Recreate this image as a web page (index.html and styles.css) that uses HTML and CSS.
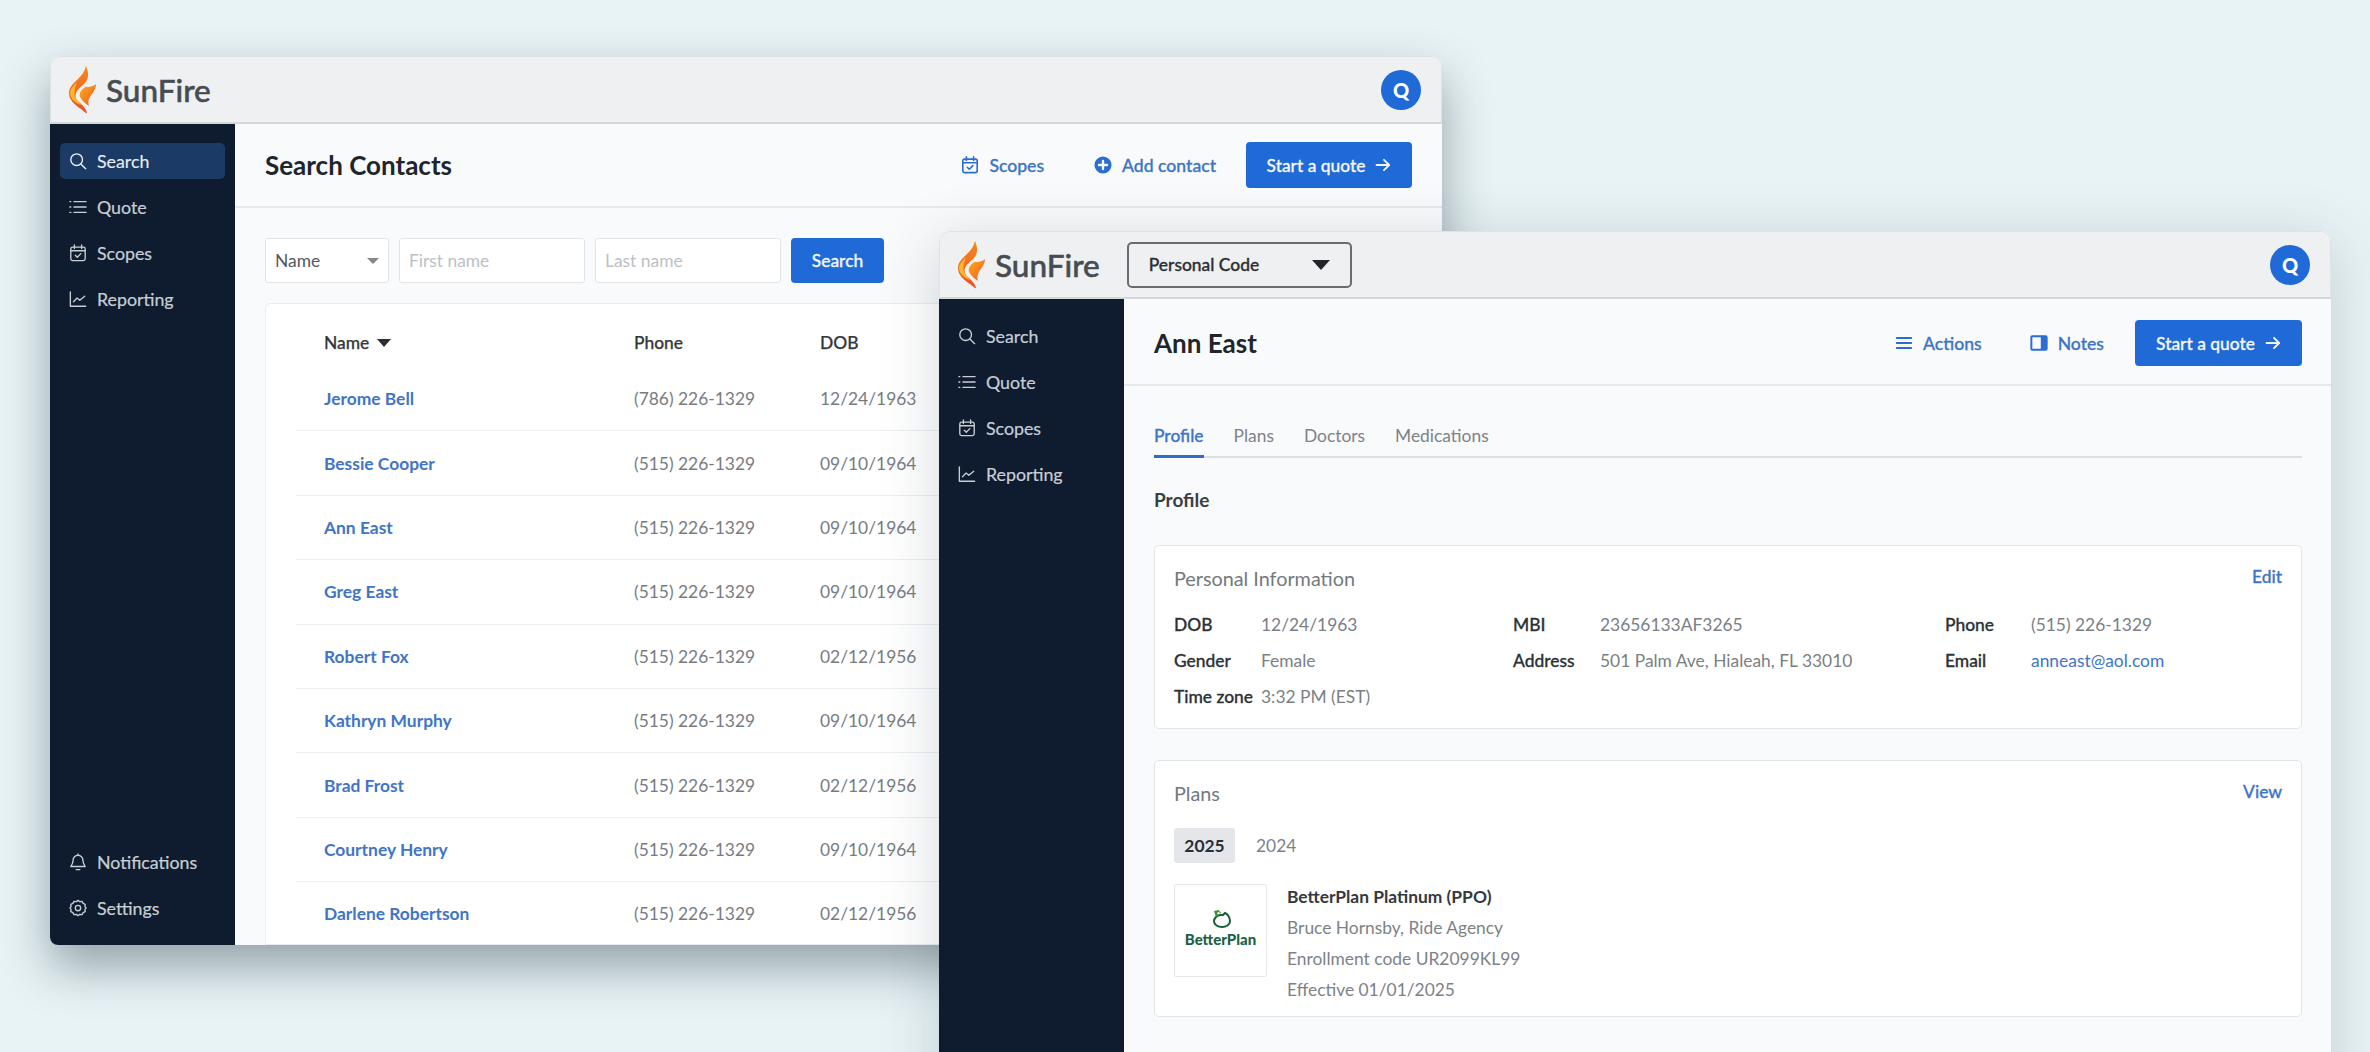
FILE: index.html
```html
<!DOCTYPE html>
<html lang="en">
<head>
<meta charset="utf-8">
<title>SunFire</title>
<link rel="stylesheet" href="styles.css">
</head>
<body>
<svg class="sprite" width="0" height="0" aria-hidden="true">
  <defs>
    <linearGradient id="flameA" x1="0" y1="0" x2="1" y2="1">
      <stop offset="0" stop-color="#ffb020"/><stop offset="1" stop-color="#f0541c"/>
    </linearGradient>
    <linearGradient id="flameB" x1="0" y1="0" x2="0" y2="1">
      <stop offset="0" stop-color="#f58a1f"/><stop offset="1" stop-color="#ef4e23"/>
    </linearGradient>
  </defs>
  <symbol id="flame" viewBox="0 0 28 48">
    <path fill="url(#flameB)" d="M17 0c2 5 3 9 1 14 -2 4 -7 7 -10 11 -3 5 -1 9 3 12 2 2 6 5 7 10 -1 1 -3 -2 -6 -4C6 39 0 34 0 27c0-6 5-10 9-14 4-4 7-8 8-13z"/>
    <path fill="#ffb62a" d="M8 16C6 22 4 27 7 33c2 3 4 4 5 6C7 37 1 33 1 27c0-4 4-8 7-11z"/>
    <path fill="url(#flameA)" d="M27 18c0 6-4 9-6 13-2 3-2 6-1 9-3-2-7-5-9-9-1-4 1-7 4-9 2-2 3-1 5-1 3-1 5-1 7-3z"/>
  </symbol>
  <symbol id="i-search" viewBox="0 0 20 20"><circle cx="8.5" cy="8.5" r="6.5"/><path d="M13.5 13.5 18.500 18.500"/></symbol>
  <symbol id="i-list" viewBox="0 0 20 20"><path d="M5.500 4H19M5.500 10H19M5.500 16H19M1 4h1M1 10h1M1 16h1"/></symbol>
  <symbol id="i-cal" viewBox="0 0 20 20"><rect x="2" y="3.500" width="16" height="15" rx="2"/><path d="M2 7.500h16M6 1v4M14 1v4M7 12.500l2.200 2.200 4-4"/></symbol>
  <symbol id="i-chart" viewBox="0 0 20 20"><path d="M1.500 2v16h17M5 13l4-4 3 2.500L17.500 7"/></symbol>
  <symbol id="i-bell" viewBox="0 0 20 20"><path d="M10 2.500a5.500 5.500 0 0 0-5.500 5.500c0 4-2 6-2.500 7h16c-.5-1-2.500-3-2.500-7A5.500 5.500 0 0 0 10 2.500zM8 18.500h4M10 1v1.500"/></symbol>
  <symbol id="i-gear" viewBox="0 0 20 20"><path d="M10 1.500l2 1.500 2.500-.3 1.200 2.200 2.300 1-.3 2.600L19 10l-1.300 1.500.3 2.600-2.300 1-1.200 2.200-2.500-.3-2 1.500-2-1.500-2.500.3-1.200-2.200-2.300-1 .3-2.600L1 10l1.300-1.500L2 5.900l2.300-1 1.200-2.200 2.500.3z"/><circle cx="10" cy="10" r="3"/></symbol>
  <symbol id="i-arrow" viewBox="0 0 16 16"><path d="M1.500 8H14M9 2.800 14.200 8 9 13.200"/></symbol>
</svg>

<main class="stage">
  <section class="window window-contacts">
    <header class="topbar">
      <div class="brand"><svg class="flame"><use href="#flame"/></svg><span class="brand-name">SunFire</span></div>
      <span class="avatar">Q</span>
    </header>
    <div class="body">
      <nav class="sidebar">
        <div class="nav-group">
          <a class="nav-item is-active"><svg class="nav-icon"><use href="#i-search"/></svg>Search</a>
          <a class="nav-item"><svg class="nav-icon"><use href="#i-list"/></svg>Quote</a>
          <a class="nav-item"><svg class="nav-icon"><use href="#i-cal"/></svg>Scopes</a>
          <a class="nav-item"><svg class="nav-icon"><use href="#i-chart"/></svg>Reporting</a>
        </div>
        <div class="nav-group">
          <a class="nav-item"><svg class="nav-icon"><use href="#i-bell"/></svg>Notifications</a>
          <a class="nav-item"><svg class="nav-icon"><use href="#i-gear"/></svg>Settings</a>
        </div>
      </nav>
      <div class="content">
        <div class="page-head">
          <h1 class="page-title">Search Contacts</h1>
          <div class="actions">
            <a class="action action-scopes"><svg class="action-icon"><use href="#i-cal"/></svg>Scopes</a>
            <a class="action action-add"><svg class="action-icon solid" viewBox="0 0 20 20"><circle cx="10" cy="10" r="9.500"/><path class="plus" d="M10 5.500v9M5.500 10h9"/></svg>Add contact</a>
            <a class="btn-primary btn-quote">Start a quote<svg class="btn-arrow"><use href="#i-arrow"/></svg></a>
          </div>
        </div>
        <div class="filters">
          <div class="field field-select">Name<span class="caret-sm"></span></div>
          <div class="field field-text">First name</div>
          <div class="field field-text">Last name</div>
          <a class="btn-primary btn-search">Search</a>
        </div>
        <div class="table-card">
          <div class="t-row t-head"><span class="t-name-head">Name<span class="caret-th"></span></span><span>Phone</span><span>DOB</span></div>
          <div class="t-row"><a class="t-link">Jerome Bell</a><span>(786) 226-1329</span><span>12/24/1963</span></div>
          <div class="t-row"><a class="t-link">Bessie Cooper</a><span>(515) 226-1329</span><span>09/10/1964</span></div>
          <div class="t-row"><a class="t-link">Ann East</a><span>(515) 226-1329</span><span>09/10/1964</span></div>
          <div class="t-row"><a class="t-link">Greg East</a><span>(515) 226-1329</span><span>09/10/1964</span></div>
          <div class="t-row"><a class="t-link">Robert Fox</a><span>(515) 226-1329</span><span>02/12/1956</span></div>
          <div class="t-row"><a class="t-link">Kathryn Murphy</a><span>(515) 226-1329</span><span>09/10/1964</span></div>
          <div class="t-row"><a class="t-link">Brad Frost</a><span>(515) 226-1329</span><span>02/12/1956</span></div>
          <div class="t-row"><a class="t-link">Courtney Henry</a><span>(515) 226-1329</span><span>09/10/1964</span></div>
          <div class="t-row"><a class="t-link">Darlene Robertson</a><span>(515) 226-1329</span><span>02/12/1956</span></div>
        </div>
      </div>
    </div>
  </section>

  <section class="window window-profile">
    <header class="topbar">
      <div class="brand"><svg class="flame"><use href="#flame"/></svg><span class="brand-name">SunFire</span></div>
      <div class="code-select">Personal Code<span class="caret-lg"></span></div>
      <span class="avatar">Q</span>
    </header>
    <div class="body">
      <nav class="sidebar">
        <div class="nav-group">
          <a class="nav-item"><svg class="nav-icon"><use href="#i-search"/></svg>Search</a>
          <a class="nav-item"><svg class="nav-icon"><use href="#i-list"/></svg>Quote</a>
          <a class="nav-item"><svg class="nav-icon"><use href="#i-cal"/></svg>Scopes</a>
          <a class="nav-item"><svg class="nav-icon"><use href="#i-chart"/></svg>Reporting</a>
        </div>
      </nav>
      <div class="content">
        <div class="page-head">
          <h1 class="page-title">Ann East</h1>
          <div class="actions">
            <a class="action action-actions"><svg class="action-icon" viewBox="0 0 20 20"><path class="thick" d="M2 4.500h16M2 10h16M2 15.500h16"/></svg>Actions</a>
            <a class="action action-notes"><svg class="action-icon" viewBox="0 0 20 20"><rect class="thick" x="1.500" y="2.500" width="17" height="15" rx="1"/><rect class="fill" x="12" y="2.500" width="6.500" height="15"/></svg>Notes</a>
            <a class="btn-primary btn-quote">Start a quote<svg class="btn-arrow"><use href="#i-arrow"/></svg></a>
          </div>
        </div>
        <div class="profile">
          <div class="tabs">
            <a class="tab is-active">Profile</a>
            <a class="tab">Plans</a>
            <a class="tab">Doctors</a>
            <a class="tab">Medications</a>
          </div>
          <h2 class="section-title">Profile</h2>
          <div class="card card-info">
            <div class="card-head"><h3 class="card-title">Personal Information</h3><a class="card-link">Edit</a></div>
            <dl class="info-grid">
              <dt>DOB</dt><dd>12/24/1963</dd>
              <dt>MBI</dt><dd>23656133AF3265</dd>
              <dt>Phone</dt><dd>(515) 226-1329</dd>
              <dt>Gender</dt><dd>Female</dd>
              <dt>Address</dt><dd>501 Palm Ave, Hialeah, FL 33010</dd>
              <dt>Email</dt><dd class="email">anneast@aol.com</dd>
              <dt>Time zone</dt><dd>3:32 PM (EST)</dd>
            </dl>
          </div>
          <div class="card card-plans">
            <div class="card-head"><h3 class="card-title">Plans</h3><a class="card-link">View</a></div>
            <div class="years"><span class="year is-active">2025</span><span class="year">2024</span></div>
            <div class="plan">
              <div class="plan-logo">
                <svg class="plan-mark" viewBox="0 0 22 19"><path class="mark-line" d="M6 7c1-1 3-2 5-2h2l2-2c3 1 5 5 5 8 0 4-4 6-8 6s-8-2-8-6c0-1 1-3 2-4z"/><path class="mark-leaf" d="M4 1 6 7 10 5 9 0zM7 3l3-2 1 2-3 2z"/></svg>
                <span class="plan-word">BetterPlan</span>
              </div>
              <div class="plan-text">
                <strong class="plan-name">BetterPlan Platinum (PPO)</strong>
                <span>Bruce Hornsby, Ride Agency</span>
                <span>Enrollment code UR2099KL99</span>
                <span>Effective 01/01/2025</span>
              </div>
            </div>
          </div>
        </div>
      </div>
    </div>
  </section>
</main>
</body>
</html>
```

FILE: styles.css
```css
* { box-sizing: border-box; }
html, body { margin: 0; height: 100%; }
body {
  background: #e8f3f6;
  font-family: "Lato", "Liberation Sans", sans-serif;
  font-size: 17.4px;
  color: #777c82;
  overflow: hidden;
}
.sprite { position: absolute; }
.stage { position: relative; width: 2370px; height: 1052px; overflow: hidden; }
h1, h2, h3, dl, dd, dt { margin: 0; }

.window {
  position: absolute;
  display: flex;
  flex-direction: column;
  background: #f9fafc;
  border-radius: 10px 10px 8px 8px;
  overflow: hidden;
}
.window-contacts {
  left: 50px; top: 56px; width: 1392px; height: 889px;
  box-shadow: 0 22px 48px rgba(30, 50, 60, .42);
}
.window-profile {
  left: 939px; top: 231px; width: 1392px; height: 900px;
  box-shadow: 0 10px 60px rgba(40, 60, 70, .2);
}

.topbar {
  flex: none;
  display: flex;
  align-items: center;
  height: 68px;
  padding: 0 20px 0 18px;
  background: #eef0f1;
  border: 1px solid #e0e3e4;
  border-bottom: 2px solid #d5d8d9;
  border-radius: 10px 10px 0 0;
}
.brand { display: flex; align-items: center; gap: 9px; }
.flame { width: 28px; height: 48px; }
.brand-name { font-size: 31.500px; font-weight: 500; color: #464c52; -webkit-text-stroke: .5px #464c52; }
.avatar {
  width: 40px; height: 40px; margin-left: auto;
  display: flex; align-items: center; justify-content: center;
  border-radius: 50%;
  background: #1f6ad6;
  color: #fff;
  font-size: 20px;
  font-weight: 900;
}
.code-select {
  display: flex; align-items: center; justify-content: space-between;
  width: 225px; height: 46px;
  margin-left: 27px;
  padding: 0 20px 0 20px;
  border: 2px solid #686d71;
  border-radius: 5px;
  font-size: 17.4px; font-weight: 500; color: #2a2f35;
  -webkit-text-stroke: .3px #2a2f35;
}
.caret-lg { border: 9px solid transparent; border-top: 10px solid #22262b; border-bottom: 0; }

.body { flex: 1; display: flex; min-height: 0; }
.sidebar {
  flex: none;
  display: flex; flex-direction: column; justify-content: space-between;
  width: 185px;
  padding: 19px 10px 19px;
  background: #0f1c2f;
}
.nav-group { display: flex; flex-direction: column; gap: 10px; }
.nav-item {
  display: flex; align-items: center; gap: 10px;
  height: 36px; padding: 0 9px;
  border-radius: 5px;
  color: #c9ced4;
  font-size: 17.800px;
  -webkit-text-stroke: .2px #c9ced4;
}
.nav-item.is-active { background: #1c3a66; color: #eef2f7; }
.nav-icon { flex: none; width: 18px; height: 18px; fill: none; stroke: currentColor; stroke-width: 1.500; stroke-linecap: round; stroke-linejoin: round; }

.content { flex: 1; min-width: 0; display: flex; flex-direction: column; }
.page-head {
  flex: none;
  display: flex; align-items: center; justify-content: space-between;
  height: 87px;
  padding: 3px 29px 0 30px;
  border-bottom: 2px solid #e6e9eb;
}
.window-contacts .page-head { height: 84px; padding: 0 30px 0 30px; }
.page-title { font-size: 26px; font-weight: 700; color: #20252b; }
.actions { display: flex; align-items: center; }
.action {
  display: flex; align-items: center; gap: 10px;
  color: #3d74c6;
  font-size: 17.600px; font-weight: 500;
  -webkit-text-stroke: .3px #3d74c6;
}
.action-icon { width: 18px; height: 18px; fill: none; stroke: currentColor; stroke-width: 1.800; stroke-linecap: round; stroke-linejoin: round; color: #2a6ed0; }
.action-icon.solid { fill: currentColor; stroke: none; }
.action-icon .plus { stroke: #f8f9fb; stroke-width: 2.600; }
.action-icon .thick { stroke-width: 2.200; }
.action-icon .fill { fill: currentColor; stroke: none; }
.action-scopes { margin-right: 50px; }
.action-add { margin-right: 30px; }
.action-actions { margin-right: 48px; }
.action-notes { margin-right: 31px; }
.btn-primary {
  display: flex; align-items: center; justify-content: center;
  background: #1f6ad6;
  color: #f2f6fc;
  border-radius: 4px;
  font-size: 17.400px; font-weight: 500;
  -webkit-text-stroke: .3px #f2f6fc;
}
.btn-quote { gap: 10px; width: 167px; height: 46px; }
.window-contacts .btn-quote { width: 166px; }
.btn-arrow { width: 16px; height: 16px; fill: none; stroke: currentColor; stroke-width: 1.800; stroke-linecap: round; stroke-linejoin: round; }

.filters { flex: none; display: flex; gap: 10px; margin: 30px 0 20px 30px; }
.field {
  display: flex; align-items: center;
  height: 45px; padding: 0 9px;
  background: #fff;
  border: 1px solid #e2e5e8;
  border-radius: 3px;
  font-size: 17.400px;
}
.field-select { width: 124px; justify-content: space-between; color: #53595f; }
.caret-sm { border: 6px solid transparent; border-top: 6px solid #83888d; border-bottom: 0; }
.field-text { width: 186px; color: #bcc1c5; }
.btn-search { width: 93px; height: 45px; }

.table-card {
  flex: 1;
  margin-left: 30px;
  padding-left: 30px;
  background: #fff;
  border: 1px solid #eaedef;
  border-radius: 6px 0 0 0;
  overflow: hidden;
}
.t-row {
  display: grid;
  grid-template-columns: 310px 186px 1fr;
  align-items: center;
  height: 64.400px;
  padding-left: 28px;
  border-bottom: 1px solid #eceef0;
  color: #777c82;
}
.t-head { height: 63px; padding-top: 14px; border-bottom: 0; color: #33383e; font-weight: 500; -webkit-text-stroke: .25px #33383e; }
.t-name-head { display: flex; align-items: center; gap: 8px; }
.caret-th { border: 7px solid transparent; border-top: 8px solid #2a2f35; border-bottom: 0; }
.t-link { color: #3f74c8; font-weight: 700; }

.profile { padding: 34px 29px 0 30px; }
.tabs { display: flex; gap: 30px; height: 38px; border-bottom: 2px solid #dde0e3; }
.tab { height: 38px; line-height: 32px; color: #7d8287; }
.tab.is-active { color: #3f74c8; font-weight: 500; -webkit-text-stroke: .3px #3f74c8; border-bottom: 3px solid #2a6ed0; }
.section-title { margin: 30px 0 33px; font-size: 19px; line-height: 24px; font-weight: 700; color: #3a3f45; }

.card { padding: 19px; background: #fff; border: 1px solid #e2e5e8; border-radius: 5px; }
.card-head { display: flex; justify-content: space-between; height: 24px; line-height: 24px; padding-top: 1px; }
.card-title { font-size: 19.800px; font-weight: 400; color: #74797e; }
.card-link { color: #3f74c8; font-weight: 500; -webkit-text-stroke: .3px #3f74c8; margin-top: -1px; }
.card-info { height: 184px; }
.info-grid {
  display: grid;
  grid-template-columns: 87px 252px 87px 345px 86px 1fr;
  grid-auto-rows: 24px;
  row-gap: 12px;
  margin-top: 24px;
  line-height: 24px;
}
.info-grid dt { color: #2c3137; font-weight: 500; white-space: nowrap; -webkit-text-stroke: .3px #2c3137; }
.info-grid dd { color: #7a7f84; }
.info-grid .email { color: #3f74c8; }
.card-plans { margin-top: 31px; height: 257px; }
.years { display: flex; align-items: center; gap: 21px; margin-top: 24px; }
.year { color: #7d8287; }
.year.is-active {
  display: flex; align-items: center; justify-content: center;
  width: 61px; height: 35px;
  background: #e4e6ea;
  border-radius: 3px;
  color: #2a2f35;
  font-weight: 700;
}
.plan { display: flex; gap: 20px; margin-top: 21px; }
.plan-logo {
  flex: none;
  display: flex; flex-direction: column; align-items: center; justify-content: center;
  width: 93px; height: 93px;
  padding-bottom: 4px;
  border: 1px solid #e6e8ea;
  border-radius: 2px;
}
.plan-mark { width: 22px; height: 19px; }
.mark-line { fill: none; stroke: #175c3a; stroke-width: 2; }
.mark-leaf { fill: #3f8f2f; }
.plan-word { font-size: 15px; font-weight: 900; color: #1e6046; line-height: 18px; margin-top: 1px; }
.plan-text { display: flex; flex-direction: column; margin-top: -3px; line-height: 31px; color: #7d8287; white-space: nowrap; }
.plan-name { color: #33383e; font-weight: 700; }
```
